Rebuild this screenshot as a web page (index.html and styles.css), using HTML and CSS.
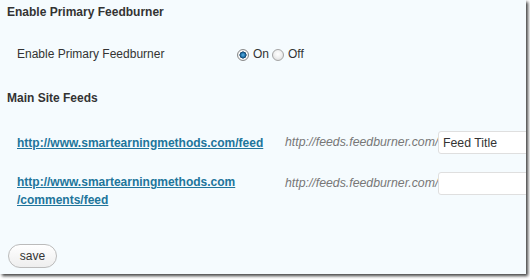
FILE: index.html
```html
<!DOCTYPE html>
<html>
<head>
<meta charset="utf-8">
<link rel="stylesheet" href="styles.css">
</head>
<body>
<div class="frame">
  <h3 class="section-title first">Enable Primary Feedburner</h3>
  <div class="option-row">
    <div class="option-label">Enable Primary Feedburner</div>
    <div class="option-field">
      <label class="radio-label"><input type="radio" name="primary" class="radio" checked> On</label>
      <label class="radio-label"><input type="radio" name="primary" class="radio"> Off</label>
    </div>
  </div>
  <h3 class="section-title second">Main Site Feeds</h3>
  <div class="feed-row one">
    <a class="feed-link" href="#">http://www.smartearningmethods.com/feed</a>
    <span class="feed-prefix">http://feeds.feedburner.com/</span>
    <input class="feed-input" type="text" value="Feed Title">
  </div>
  <div class="feed-row two">
    <a class="feed-link" href="#">http://www.smartearningmethods.com<br>/comments/feed</a>
    <span class="feed-prefix">http://feeds.feedburner.com/</span>
    <input class="feed-input" type="text" value="">
  </div>
  <button class="save-btn" type="button">save</button>
</div>
</body>
</html>
```

FILE: styles.css
```css
html, body {
  margin: 0;
  padding: 0;
  background: #ffffff;
}
body {
  width: 530px;
  height: 279px;
  overflow: hidden;
  font-family: "Liberation Sans", Arial, sans-serif;
  color: #333333;
}
.frame {
  width: 526px;
  height: 274px;
  background: #f5fbfe;
  box-shadow: 2px 2px 3px rgba(0, 0, 0, 0.75);
  overflow: hidden;
  display: flex;
  flex-direction: column;
  align-items: flex-start;
}
.section-title {
  margin: 0 0 0 7px;
  font-size: 12px;
  line-height: 16px;
  font-weight: bold;
  color: #333333;
}
.section-title.first { margin-top: 4px; }
.section-title.second { margin-top: 28px; }

.option-row {
  margin-top: 26px;
  display: flex;
  align-items: center;
  height: 16px;
  font-size: 12px;
  line-height: 16px;
}
.option-label {
  width: 220px;
  padding-left: 17px;
}
.option-field {
  display: flex;
  align-items: center;
}
.radio-label {
  display: flex;
  align-items: center;
}
.radio-label + .radio-label { margin-left: 3px; }
.radio {
  -webkit-appearance: none;
  appearance: none;
  width: 12px;
  height: 12px;
  margin: 1px 4px 0 0;
  border-radius: 50%;
  border: 1px solid #a4a4a4;
  background: radial-gradient(circle at 50% 40%, #ffffff 0, #f1f1f1 45%, #d5d5d5 100%);
  box-sizing: border-box;
}
.radio:checked {
  background: radial-gradient(circle, #5fb6e6 0, #1f6fa8 2.2px, #0d3b5f 3.3px, #ffffff 3.8px, #ececec 5px, #d0d0d0 6px);
  border-color: #8a8a8a;
}
.feed-row {
  display: grid;
  grid-template-columns: 285px 153px 100px;
  width: 600px;
}
.feed-row.one {
  margin-top: 25px;
  align-items: center;
  height: 23px;
}
.feed-row.two {
  margin-top: 18px;
  align-items: start;
}
.feed-row.two .feed-link {
  padding-top: 1px;
}
.feed-link {
  padding-left: 17px;
  font-size: 12px;
  line-height: 18px;
  font-weight: bold;
  color: #21759b;
  text-decoration: underline;
}
.feed-prefix {
  font-size: 12.3px;
  line-height: 23px;
  font-style: italic;
  color: #777777;
  text-align: right;
  white-space: nowrap;
}
.feed-input {
  box-sizing: border-box;
  width: 100px;
  height: 23px;
  margin: 0;
  padding: 0 4px;
  border: 1px solid #dfdfdf;
  border-radius: 3px;
  background: #ffffff;
  font-family: "Liberation Sans", Arial, sans-serif;
  font-size: 12.3px;
  color: #333333;
}
.save-btn {
  margin: 35px 0 0 8px;
  width: 49px;
  height: 24px;
  padding: 0;
  border: 1px solid #bbbbbb;
  border-radius: 12px;
  background: linear-gradient(#ffffff, #eeeeee);
  font-family: "Liberation Sans", Arial, sans-serif;
  font-size: 12px;
  color: #333333;
}
```
